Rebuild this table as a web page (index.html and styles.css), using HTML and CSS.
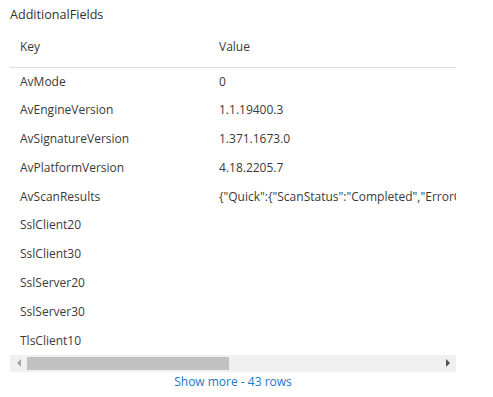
FILE: index.html
```html
<!DOCTYPE html>
<html lang="en">
<head>
<meta charset="utf-8">
<title>AdditionalFields</title>
<link rel="stylesheet" href="styles.css">
</head>
<body>
<section class="panel">
  <h2 class="panel-title">AdditionalFields</h2>
  <div class="table-wrap">
    <table class="fields">
      <thead>
        <tr><th class="col-key">Key</th><th class="col-value">Value</th></tr>
      </thead>
      <tbody>
        <tr><td>AvMode</td><td>0</td></tr>
        <tr><td>AvEngineVersion</td><td>1.1.19400.3</td></tr>
        <tr><td>AvSignatureVersion</td><td>1.371.1673.0</td></tr>
        <tr><td>AvPlatformVersion</td><td>4.18.2205.7</td></tr>
        <tr><td>AvScanResults</td><td class="clip">{"Quick":{"ScanStatus":"Completed","ErrorC</td></tr>
        <tr><td>SslClient20</td><td></td></tr>
        <tr><td>SslClient30</td><td></td></tr>
        <tr><td>SslServer20</td><td></td></tr>
        <tr><td>SslServer30</td><td></td></tr>
        <tr><td>TlsClient10</td><td></td></tr>
      </tbody>
    </table>
  </div>
  <div class="hscroll">
    <span class="arrow arrow-left"></span>
    <div class="track"><div class="thumb"></div></div>
    <span class="arrow arrow-right"></span>
  </div>
  <a class="show-more" href="#">Show more - 43 rows</a>
</section>
</body>
</html>
```
FILE: styles.css
```css
* { box-sizing: border-box; }

html, body {
  margin: 0;
  background: #ffffff;
}

body {
  font-family: "Open Sans", "Noto Sans", sans-serif;
  font-size: 12px;
  color: #3b3a39;
}

.panel {
  width: 456px;
  padding: 0 0 0 10px;
}

.panel-title {
  margin: 0;
  padding-top: 6px;
  height: 27px;
  font-size: 12.6px;
  font-weight: 400;
  line-height: 18px;
  color: #323130;
}

.table-wrap {
  width: 446px;
  overflow: hidden;
}

.fields {
  border-collapse: collapse;
  white-space: nowrap;
  table-layout: fixed;
  width: 446px;
}

.fields th {
  height: 40px;
  padding: 0 10px;
  text-align: left;
  font-weight: 400;
  color: #3b3a39;
  vertical-align: middle;
}

.fields thead tr {
  border-bottom: 1px solid #e1dfdd;
}

.col-key { width: 199px; }

.fields td {
  height: 28.8px;
  padding: 0 10px;
  vertical-align: middle;
  line-height: 16px;
  color: #3b3a39;
  overflow: hidden;
}

.fields td.clip {
  padding-right: 0;
}

.hscroll {
  width: 446px;
  height: 17px;
  background: #f0f0f0;
  display: flex;
  align-items: center;
}

.arrow {
  width: 17px;
  height: 17px;
  display: flex;
  align-items: center;
  justify-content: center;
  flex: none;
}

.arrow::before {
  content: "";
  width: 0;
  height: 0;
  border-top: 4px solid transparent;
  border-bottom: 4px solid transparent;
}

.arrow-left::before { border-right: 4px solid #a3a3a3; }
.arrow-right::before { border-left: 4px solid #505050; }

.track {
  flex: 1;
  height: 13px;
}

.thumb {
  width: 202px;
  height: 13px;
  background: #c1c1c1;
}

.show-more {
  display: block;
  width: 446px;
  text-align: center;
  margin-top: 1px;
  line-height: 18px;
  font-size: 12px;
  color: #1979ca;
  text-decoration: none;
}
```
